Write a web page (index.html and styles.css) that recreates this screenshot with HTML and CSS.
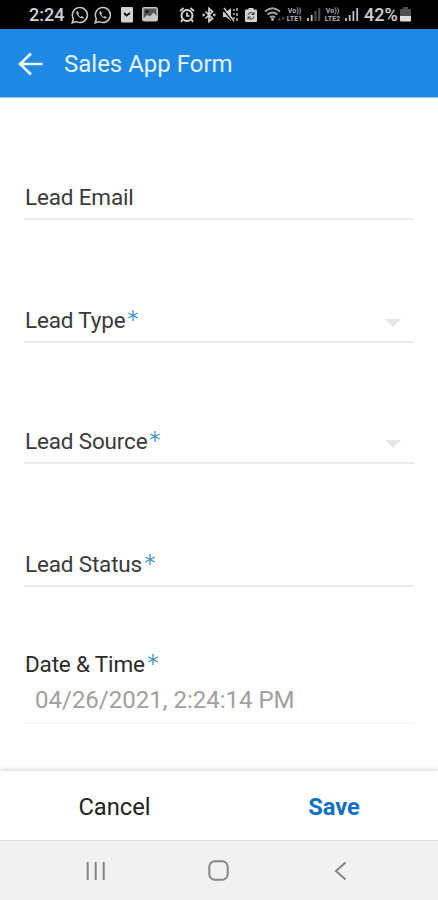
FILE: index.html
```html
<!DOCTYPE html>
<html lang="en">
<head>
<meta charset="utf-8">
<title>Sales App Form</title>
<link rel="stylesheet" href="styles.css">
</head>
<body>
<div class="screen">
  <div class="status">
    <div class="status-left">
      <span class="clock">2:24</span>
      <svg width="18" height="18" viewBox="0 0 18 18"><path d="M1.2 16.8l1.2-4A7.5 7.5 0 1 1 5.300 15.600z" fill="none" stroke="#c9c9c9" stroke-width="1.500"/><path d="M6.300 4.800c-1.600 1-1 3.400 1 5.500s4.500 3 5.700 1.300l-2.200-1.500-1 .8C8.600 10.300 7.800 9.500 7.200 8.400l.8-1z" fill="#c9c9c9"/></svg>
      <svg width="18" height="18" viewBox="0 0 18 18"><path d="M1.2 16.8l1.2-4A7.5 7.5 0 1 1 5.300 15.600z" fill="none" stroke="#c9c9c9" stroke-width="1.500"/><path d="M6.300 4.800c-1.600 1-1 3.400 1 5.500s4.500 3 5.700 1.300l-2.200-1.500-1 .8C8.600 10.300 7.800 9.500 7.200 8.400l.8-1z" fill="#c9c9c9"/></svg>
      <svg class="note" width="12" height="16" viewBox="0 0 12 16"><rect width="12" height="15.500" rx="1" fill="#d2d2d2"/><path d="M3 6l2.500 2.500L9 6" fill="none" stroke="#111" stroke-width="1.800"/></svg>
      <svg class="photo" width="16" height="15" viewBox="0 0 16 15"><rect x=".8" y=".8" width="14.400" height="13" rx="1.500" fill="#555" stroke="#c9c9c9" stroke-width="1.500"/><path d="M1 12l4-4 3 1.500 3.500-4L15 9.500V14H1z" fill="#c9c9c9"/><circle cx="5" cy="4.500" r="1.500" fill="#111"/></svg>
    </div>
    <div class="status-right">
      <svg width="16" height="16" viewBox="0 0 16 16"><circle cx="8" cy="8.500" r="5.500" fill="none" stroke="#d5d5d5" stroke-width="2"/><path d="M1 4.200L4.500 1M15 4.200L11.500 1M3.500 12.500L2 15M12.500 12.500L14 15M8 5.500V9h2.500" fill="none" stroke="#d5d5d5" stroke-width="1.700"/></svg>
      <svg class="bt" width="14" height="16" viewBox="0 0 14 16"><path d="M3.500 4.500l7 7L7 14.500v-13l3.500 3-7 7" fill="none" stroke="#d5d5d5" stroke-width="1.700"/><circle cx="1.700" cy="8" r="1.400" fill="#bbb"/><circle cx="12.300" cy="8" r="1.400" fill="#bbb"/></svg>
      <svg width="17" height="16" viewBox="0 0 17 16"><path d="M1 5h3l5-4v13l-5-4H1z" fill="#cfcfcf"/><path d="M1 2.500l10 12" stroke="#000" stroke-width="1.200"/><path d="M2 1l10 13" stroke="#cfcfcf" stroke-width="1.400"/><path d="M12 2v2M12 6v2M12 10v2M15 1v3M15 6v3M15 11v3" stroke="#bbb" stroke-width="1.500"/></svg>
      <svg width="12" height="16" viewBox="0 0 12 16"><path d="M3.500 1h5v1.500H11q1 0 1 1V14q0 1-1 1H1q-1 0-1-1V3.500q0-1 1-1h2.500z" fill="#d2d2d2"/><path d="M3 8a3 3 0 0 1 5.700-.7M9 9.500a3 3 0 0 1-5.700.8M9 5v2.500H6.500M3 12.500V10h2.500" fill="none" stroke="#333" stroke-width="1"/></svg>
      <svg class="wifi" width="21" height="17" viewBox="0 0 21 17"><path d="M1 5.500q7.500-6.500 15 0M3.500 8.500q5-4 10 0M6 11.500q2.500-2 5 0" fill="none" stroke="#a5a5a5" stroke-width="1.900"/><circle cx="8.500" cy="13.500" r="1.400" fill="#bbb"/><path d="M14 14.500l1.500-3 1.500 3zM17.500 11.500h3l-1.500 3z" fill="#555"/></svg>
      <span class="lte"><span>Vo))</span><span>LTE1</span></span>
      <svg class="bars" width="14" height="15" viewBox="0 0 14 15"><path d="M1 11v3M4.700 8v6" stroke="#c9c9c9" stroke-width="1.800"/><path d="M8.400 4v10M12.200 1v13" stroke="#4a4a4a" stroke-width="2.200"/></svg>
      <span class="lte"><span>Vo))</span><span>LTE2</span></span>
      <svg class="bars" width="14" height="15" viewBox="0 0 14 15"><path d="M1 11v3M4.700 8v6M8.400 4v10M12.200 1v13" stroke="#c0c0c0" stroke-width="1.800"/></svg>
      <span class="percent">42%</span>
      <svg class="battery" width="11" height="15" viewBox="0 0 11 15"><path d="M3 0h5v2h2q1 0 1 1v6H0V3q0-1 1-1h2z" fill="#505050"/><path d="M0 9h11v4.500q0 1-1 1H1q-1 0-1-1z" fill="#dedede"/></svg>
    </div>
  </div>
  <header class="appbar">
    <svg class="back" width="26" height="24" viewBox="0 0 26 24"><path d="M24.500 12H2M13 1.500L2 12l11 10.500" fill="none" stroke="#f0f8ff" stroke-width="2.700"/></svg>
    <h1>Sales App Form</h1>
  </header>
  <main class="form">
    <div class="field email"><label>Lead Email</label></div>
    <div class="field type"><label>Lead Type</label><svg class="star" width="10" height="11" viewBox="0 0 11 12"><path d="M5.500 0v12M.3 3.200l10.400 5.600M.3 8.800l10.400-5.600"/></svg><i class="caret"></i></div>
    <div class="field source"><label>Lead Source</label><svg class="star" width="10" height="11" viewBox="0 0 11 12"><path d="M5.500 0v12M.3 3.200l10.400 5.600M.3 8.800l10.400-5.600"/></svg><i class="caret"></i></div>
    <div class="field state"><label>Lead Status</label><svg class="star" width="10" height="11" viewBox="0 0 11 12"><path d="M5.500 0v12M.3 3.200l10.400 5.600M.3 8.800l10.400-5.600"/></svg></div>
    <div class="field when"><label>Date &amp; Time</label><svg class="star" width="10" height="11" viewBox="0 0 11 12"><path d="M5.500 0v12M.3 3.200l10.400 5.600M.3 8.800l10.400-5.600"/></svg></div>
    <div class="value"><span>04/26/2021, 2:24:14 PM</span></div>
  </main>
  <footer class="actions">
    <div class="action"><span class="cancel">Cancel</span></div>
    <div class="action"><span class="save">Save</span></div>
  </footer>
  <nav class="nav">
    <svg width="20" height="20" viewBox="0 0 20 20"><path d="M1.700 1v18M9.700 1v18M17.700 1v18"/></svg>
    <svg class="home" width="21" height="21" viewBox="0 0 21 21"><rect x="1.300" y="1.300" width="18.400" height="18.400" rx="5.500"/></svg>
    <svg width="13" height="20" viewBox="0 0 13 20"><path d="M11.500 1.500L2 10l9.500 8.500"/></svg>
  </nav>
</div>
</body>
</html>
```
FILE: styles.css
```css
* { box-sizing: border-box; }
body { margin: 0; font-family: Roboto, "Liberation Sans", sans-serif; background: #fff; }
svg { display: block; flex: none; }
.screen { width: 438px; height: 900px; display: flex; flex-direction: column; overflow: hidden; }

.status { height: 29px; flex: none; background: #000; color: #d0d0d0; display: flex; justify-content: space-between; padding: 0 27px 0 29px; }
.status-left, .status-right { display: flex; align-items: center; }
.status-left { gap: 5.500px; }
.clock, .percent { font-size: 18px; font-weight: 500; line-height: 30px; white-space: nowrap; }
.clock { width: 36px; }
.note { margin-left: 3px; }
.photo { margin-left: 4px; }
.status-right { gap: 6.500px; }
.bt { margin: 0 -1px 0 1px; }
.wifi { margin-right: -6px; }
.lte { width: 19px; display: flex; flex-direction: column; align-items: center; font-size: 7px; font-weight: 700; line-height: 8px; color: #b5b5b5; }
.bars { margin: 0 -4px; }
.percent { width: 33px; margin-left: 3px; }
.battery { margin-left: -3.500px; }

.appbar { height: 69px; flex: none; background: #1e88e5; border-bottom: 1px solid #8fc4f2; display: flex; align-items: center; padding: 1px 0 0 18px; }
.appbar h1 { margin: 0 0 0 20px; font-size: 24px; font-weight: 400; line-height: 30px; color: #e6f3ff; }

.form { flex: 1; padding: 0 24px; }
.field { display: flex; align-items: flex-end; border-bottom: 2px solid #ebebeb; padding: 0 13px 7px 1px; }
.field label { font-size: 22.500px; line-height: 28px; letter-spacing: -0.170px; color: #3a3a3a; white-space: nowrap; }
.email { height: 122px; }
.type { height: 123px; }
.source { height: 121px; }
.state { height: 123px; }
.when { height: 98px; border: 0; }
.when label { color: #2a2a2a; }
.star { margin: 0 0 13px 3px; fill: none; stroke: #3b8fd4; stroke-width: 1.400; }
.caret { margin: 0 0 7px auto; border: 8px solid transparent; border-top-color: #e6e6e6; border-bottom: 0; }
.value { height: 39px; border-bottom: 1px solid #f4f4f4; padding: 0 0 0 11px; font-size: 24px; line-height: 30px; color: #a0a0a0; white-space: nowrap; }

.actions { height: 70px; flex: none; display: flex; background: #fff; border-bottom: 1px solid #dcdcdc; box-shadow: 0 -1px 5px rgba(0, 0, 0, .18); }
.action { flex: 1; display: flex; align-items: center; justify-content: center; padding-top: 3px; font-size: 23.700px; color: #1f1f1f; }
.cancel { margin-left: 10px; }
.save { margin-left: 11px; font-weight: 700; color: #1070c4; }

.nav { height: 59px; flex: none; background: #f1f1f1; display: flex; align-items: center; justify-content: space-between; padding: 0 91px 0 86px; }
.nav svg { fill: none; stroke: #858585; stroke-width: 2; }
.nav .home { margin-right: 3px; }
```
